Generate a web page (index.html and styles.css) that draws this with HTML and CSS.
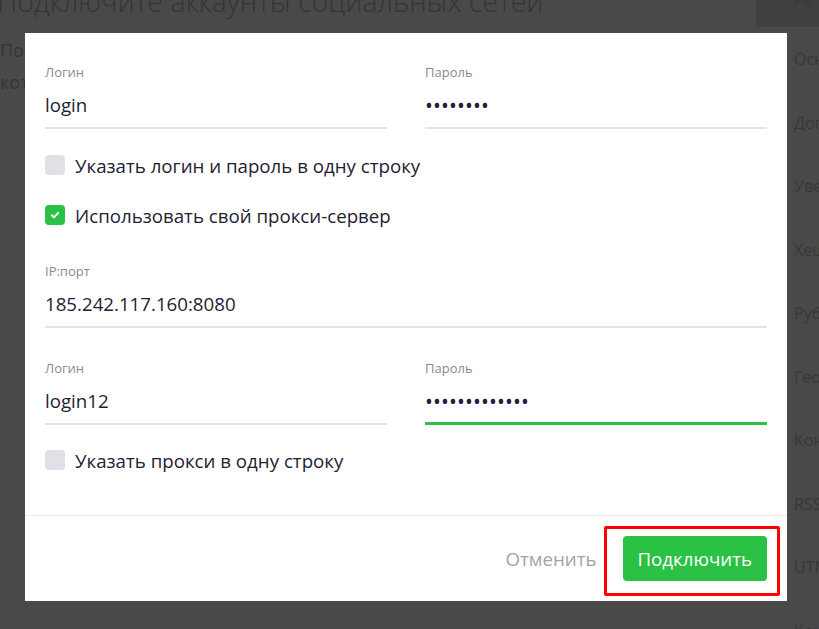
FILE: index.html
```html
<!DOCTYPE html>
<html lang="ru">
<head>
    <meta charset="UTF-8">
    <title>Подключение аккаунта</title>
    <link rel="stylesheet" href="styles.css">
</head>
<body>
    <div class="page">
        <!-- Page behind the overlay -->
        <main class="content">
            <h1 class="page-title">Подключите аккаунты социальных сетей</h1>
            <p class="page-text">После подключения аккаунтов вы сможете публиковать записи,<br>которые будут автоматически отправляться в социальные сети.</p>
        </main>
        <aside class="sidebar">
            <div class="sidebar-top">Ре</div>
            <ul class="sidebar-menu">
                <li>Основные</li>
                <li>Дополнительно</li>
                <li>Уведомления</li>
                <li>Хештеги</li>
                <li>Рубрики</li>
                <li>Геотеги</li>
                <li>Конкуренты</li>
                <li>RSS</li>
                <li>UTM-метки</li>
                <li>Команда</li>
            </ul>
        </aside>
    </div>

    <!-- Modal -->
    <div class="modal">
        <div class="modal-body">
            <div class="field-row">
                <div class="field">
                    <div class="field-label">Логин</div>
                    <div class="field-value">login</div>
                </div>
                <div class="field">
                    <div class="field-label">Пароль</div>
                    <div class="field-value dots">••••••••</div>
                </div>
            </div>

            <div class="check-row">
                <span class="check-box"></span>
                <span class="check-text">Указать логин и пароль в одну строку</span>
            </div>
            <div class="check-row check-row-tight">
                <span class="check-box checked">
                    <svg width="12" height="12" viewBox="0 0 12 12"><path d="M2.8 6.3l2.2 2.1 4.2-4.6" fill="none" stroke="#fff" stroke-width="2" stroke-linecap="round" stroke-linejoin="round"/></svg>
                </span>
                <span class="check-text">Использовать свой прокси-сервер</span>
            </div>

            <div class="field field-spaced">
                <div class="field-label">IP:порт</div>
                <div class="field-value">185.242.117.160:8080</div>
            </div>

            <div class="field-row field-spaced">
                <div class="field">
                    <div class="field-label">Логин</div>
                    <div class="field-value">login12</div>
                </div>
                <div class="field">
                    <div class="field-label">Пароль</div>
                    <div class="field-value dots focused">•••••••••••••</div>
                </div>
            </div>

            <div class="check-row check-row-last">
                <span class="check-box"></span>
                <span class="check-text">Указать прокси в одну строку</span>
            </div>
        </div>
        <div class="modal-footer">
            <button class="btn-cancel">Отменить</button>
            <div class="btn-wrap">
                <button class="btn-connect">Подключить</button>
            </div>
        </div>
    </div>
</body>
</html>
```

FILE: styles.css
```css
* {
    margin: 0;
    padding: 0;
    box-sizing: border-box;
}

body {
    font-family: 'Open Sans', 'Noto Sans', sans-serif;
    background: #494949;
    width: 819px;
    height: 629px;
    overflow: hidden;
    position: relative;
}

.page {
    display: flex;
    height: 100%;
}

.content {
    flex: 1;
    overflow: hidden;
    color: #353535;
}

.page-title {
    font-size: 28.5px;
    font-weight: 300;
    line-height: 40px;
    margin: -19px 0 0 -3px;
    white-space: nowrap;
}

.page-text {
    font-size: 18px;
    line-height: 32px;
    margin-top: 13px;
    white-space: nowrap;
}

.sidebar {
    width: 63px;
    overflow: hidden;
    color: #383838;
}

.sidebar-top {
    height: 27px;
    background: #404040;
    padding-left: 38px;
    font-size: 16px;
    line-height: 0;
    overflow: hidden;
}

.sidebar-menu {
    list-style: none;
    padding-left: 38px;
    margin-top: 1px;
}

.sidebar-menu li {
    font-size: 16px;
    line-height: 63.5px;
    white-space: nowrap;
}

/* modal */
.modal {
    position: absolute;
    left: 25px;
    top: 33px;
    width: 762px;
    height: 568px;
    background: #ffffff;
    display: flex;
    flex-direction: column;
}

.modal-body {
    flex: 1;
    padding: 30px 20px 0 20px;
}

.field-row {
    display: grid;
    grid-template-columns: 1fr 1fr;
    column-gap: 38px;
}

.field-label {
    font-size: 13px;
    line-height: 18px;
    color: #8a8a8a;
    margin-bottom: 12px;
}

.field-value {
    font-size: 18.7px;
    line-height: 24px;
    color: #1e2233;
    padding-bottom: 10px;
    border-bottom: 2px solid #e4e4e4;
}

.field-value.dots {
    font-size: 21px;
    letter-spacing: 0.1px;
}

.field-value.focused {
    border-bottom: 3px solid #2bc144;
    padding-bottom: 9px;
}

.field-spaced {
    margin-top: 32px;
}

.field-row.field-spaced {
    margin-top: 31px;
}

.check-row {
    display: flex;
    align-items: center;
    gap: 10px;
    margin-top: 21px;
    height: 30px;
}

.check-row-tight {
    margin-top: 20px;
}

.check-row-last {
    margin-top: 20px;
}

.check-box {
    width: 20px;
    height: 20px;
    border-radius: 4px;
    background: #dfe1e6;
    display: flex;
    align-items: center;
    justify-content: center;
}

.check-box.checked {
    background: #2bc144;
}

.check-text {
    font-size: 18.7px;
    color: #1e2233;
}

.modal-footer {
    border-top: 1px solid #e9e9e9;
    padding: 20px;
    display: flex;
    justify-content: flex-end;
    align-items: center;
    gap: 26px;
}

.btn-cancel {
    font-family: inherit;
    font-size: 18.7px;
    color: #a3a3a3;
    background: none;
    border: none;
}

.btn-wrap {
    position: relative;
}

/* red highlight frame from the screenshot */
.btn-wrap::after {
    content: '';
    position: absolute;
    top: -10px;
    left: -19px;
    right: -13px;
    bottom: -15px;
    border: 3px solid #ff0000;
    border-radius: 2px;
}

.btn-connect {
    font-family: inherit;
    font-size: 18.7px;
    color: #ffffff;
    background: #2bc144;
    border: none;
    border-radius: 4px;
    height: 45px;
    padding: 0 15px;
    display: block;
}
```
